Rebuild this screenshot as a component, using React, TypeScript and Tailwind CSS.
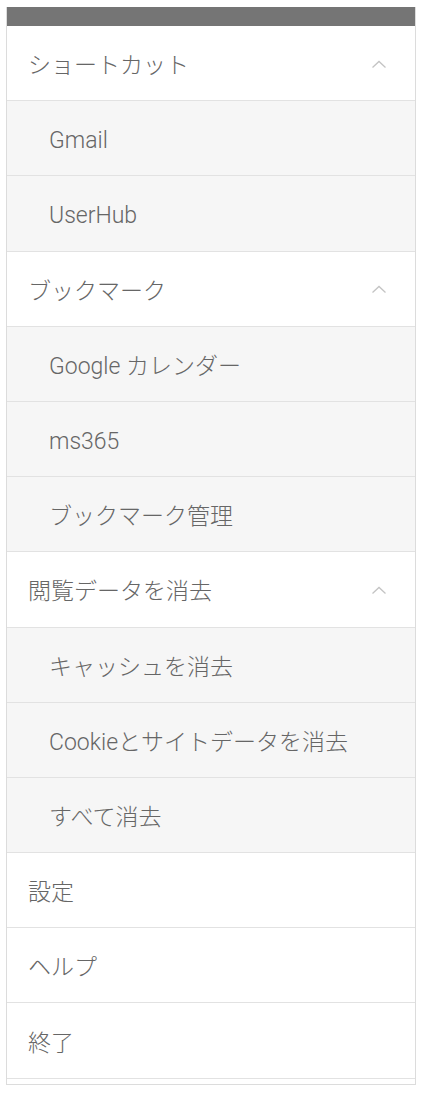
import { ReactNode } from "react";

type Group = {
  title: string;
  items: string[];
};

const groups: Group[] = [
  { title: "ショートカット", items: ["Gmail", "UserHub"] },
  { title: "ブックマーク", items: ["Google カレンダー", "ms365", "ブックマーク管理"] },
  {
    title: "閲覧データを消去",
    items: ["キャッシュを消去", "Cookieとサイトデータを消去", "すべて消去"],
  },
];

const singles = ["設定", "ヘルプ", "終了"];

const Chevron = () => (
  <svg width="16" height="9" viewBox="0 0 16 9" fill="none" className="mr-[28px] -mt-[3px]">
    <path d="M1.5 7.5 L8 1.5 L14.5 7.5" stroke="#c4c4c4" strokeWidth="1.3" />
  </svg>
);

const Row = ({ children, sub }: { children: ReactNode; sub?: boolean }) => (
  <div
    className={
      sub
        ? "flex h-[75.2px] items-center justify-between border-b border-[#e2e2e2] bg-[#f6f6f6] pt-[5px] pl-[42px]"
        : "flex h-[75.2px] items-center justify-between border-b border-[#e2e2e2] bg-white pt-[5px] pl-[21px]"
    }
  >
    {children}
  </div>
);

const App = () => {
  return (
    <div
      className="min-h-screen bg-white pt-[7px] px-[6px]"
      style={{ fontFamily: "Roboto, 'Noto Sans CJK JP', sans-serif" }}
    >
      <div className="w-[410px] border-x border-b border-[#dcdcdc] pb-[5px]">
        <div className="h-[19px] bg-[#757575]" />
        {groups.map((g) => (
          <div key={g.title}>
            <Row>
              <span className="text-[23px] font-light leading-none text-[#666666]">{g.title}</span>
              <Chevron />
            </Row>
            {g.items.map((item) => (
              <Row key={item} sub>
                <span className="text-[23px] font-light leading-none text-[#666666]">{item}</span>
              </Row>
            ))}
          </div>
        ))}
        {singles.map((s) => (
          <Row key={s}>
            <span className="text-[23px] font-light leading-none text-[#666666]">{s}</span>
          </Row>
        ))}
      </div>
    </div>
  );
};

export default App;
